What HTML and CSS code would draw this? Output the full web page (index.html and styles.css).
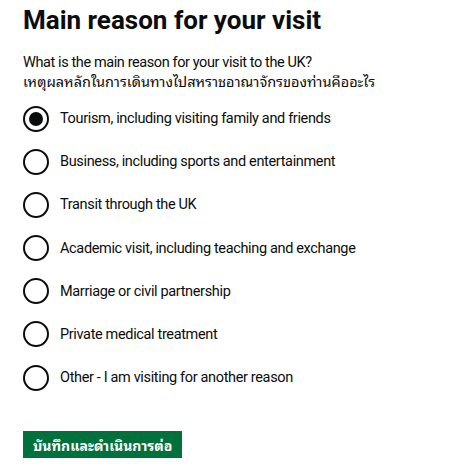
FILE: index.html
```html
<!DOCTYPE html>
<html lang="en">
<head>
  <meta charset="utf-8">
  <title>Main reason for your visit</title>
  <meta name="viewport" content="width=device-width, initial-scale=1">
  <link rel="stylesheet" href="styles.css">
</head>
<body>
<main class="page">
  <form class="form" action="#" method="post">
    <fieldset class="fieldset">
      <legend class="legend">
        <h1 class="heading">Main reason for your visit</h1>
      </legend>
      <div class="hint">
        <p class="hint-line">What is the main reason for your visit to the UK?</p>
        <p class="hint-line thai" lang="th">เหตุผลหลักในการเดินทางไปสหราชอาณาจักรของท่านคืออะไร</p>
      </div>
      <div class="radios">
        <label class="radio">
          <input class="radio-input" type="radio" name="reason" value="tourism" checked>
          <span class="radio-label">Tourism, including visiting family and friends</span>
        </label>
        <label class="radio">
          <input class="radio-input" type="radio" name="reason" value="business">
          <span class="radio-label">Business, including sports and entertainment</span>
        </label>
        <label class="radio">
          <input class="radio-input" type="radio" name="reason" value="transit">
          <span class="radio-label">Transit through the UK</span>
        </label>
        <label class="radio">
          <input class="radio-input" type="radio" name="reason" value="academic">
          <span class="radio-label">Academic visit, including teaching and exchange</span>
        </label>
        <label class="radio">
          <input class="radio-input" type="radio" name="reason" value="marriage">
          <span class="radio-label">Marriage or civil partnership</span>
        </label>
        <label class="radio">
          <input class="radio-input" type="radio" name="reason" value="medical">
          <span class="radio-label">Private medical treatment</span>
        </label>
        <label class="radio">
          <input class="radio-input" type="radio" name="reason" value="other">
          <span class="radio-label">Other - I am visiting for another reason</span>
        </label>
      </div>
    </fieldset>
    <button class="button thai" type="submit" lang="th">บันทึกและดำเนินการต่อ</button>
  </form>
</main>
</body>
</html>
```
FILE: styles.css
```css
body {
    margin: 0;
    font-family: Roboto, 'Liberation Sans', Arial, sans-serif;
    color: #0b0c0c;
    background-color: #fff;
}

.page {
    padding: 0 23px;
}

.fieldset {
    margin: 0;
    padding: 0;
    border: 0;
    min-width: 0;
}

.legend {
    padding: 0;
}

.heading {
    margin: 3px 0 0;
    font-size: 26px;
    line-height: 34px;
    font-weight: 700;
}

.hint {
    margin-top: 16.5px;
    font-size: 14.5px;
    letter-spacing: -0.4px;
}

.hint-line {
    margin: 0;
    line-height: 18px;
    white-space: nowrap;
}

.thai {
    font-family: 'Noto Sans Thai Looped', 'Noto Sans Thai', Roboto, sans-serif;
    letter-spacing: 0;
}

.radios {
    display: flex;
    flex-direction: column;
    gap: 17.2px;
    margin-top: 16px;
}

.radio {
    display: flex;
    align-items: center;
    gap: 11px;
    font-size: 14.5px;
    letter-spacing: -0.35px;
    cursor: pointer;
}

.radio-input {
    appearance: none;
    flex: none;
    width: 26px;
    height: 26px;
    margin: 0;
    border: 2px solid #0b0c0c;
    border-radius: 50%;
    display: grid;
    place-content: center;
}

.radio-input:checked::before {
    content: "";
    width: 14px;
    height: 14px;
    border-radius: 50%;
    background: #0b0c0c;
}

.button {
    margin-top: 40px;
    padding: 5px 10px;
    border: 0;
    font-size: 14px;
    font-weight: 700;
    line-height: 17px;
    color: #fff;
    background-color: #00703c;
    box-shadow: 0 2px 0 #002d18;
    cursor: pointer;
}
```
